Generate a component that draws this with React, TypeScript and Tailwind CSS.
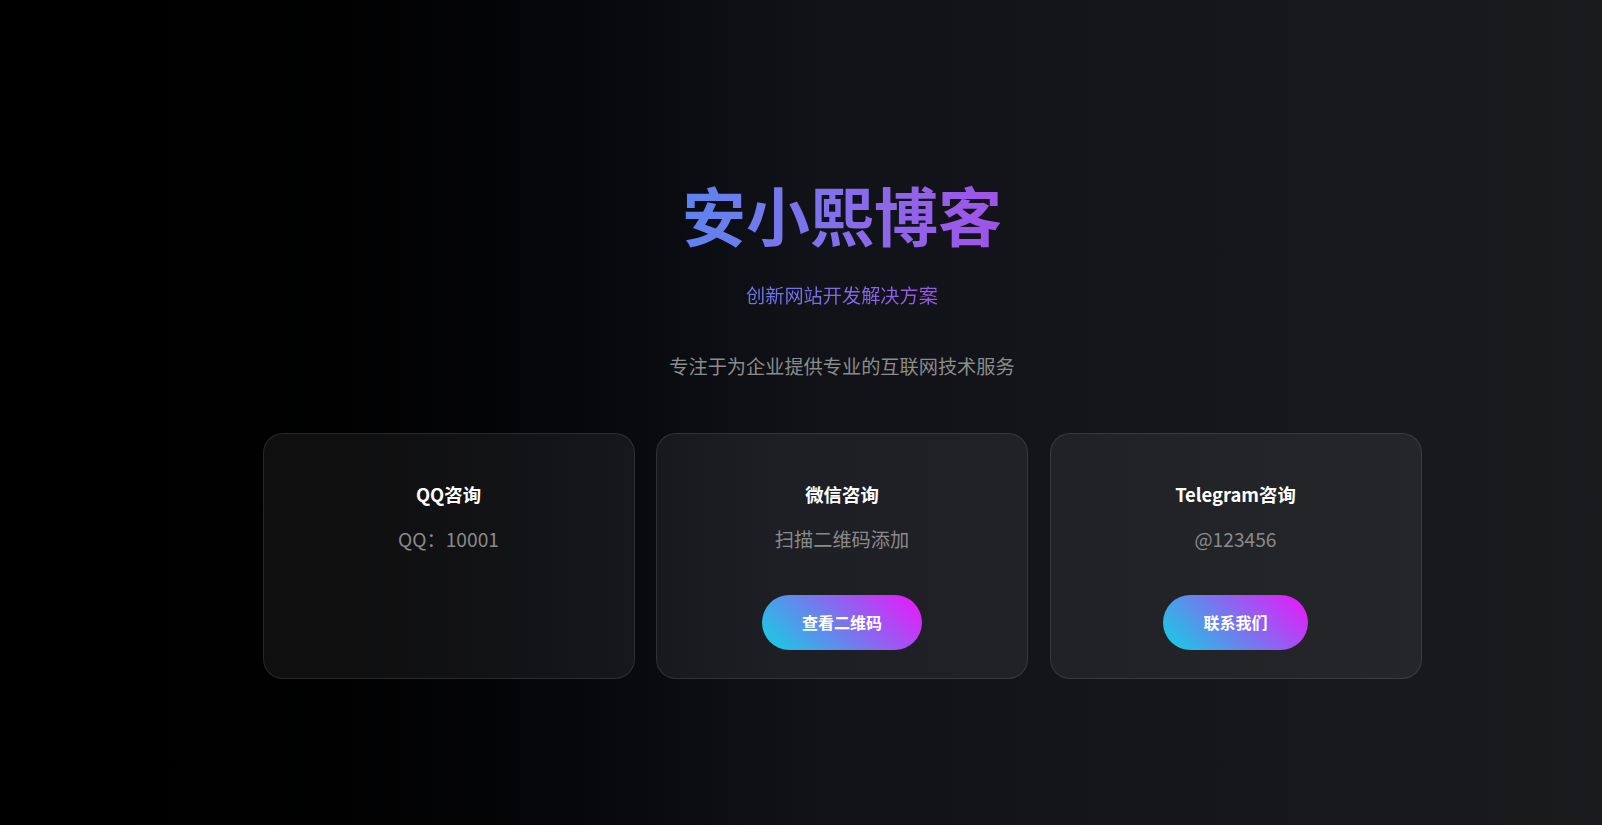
import React from 'react';

const font = { fontFamily: '"Noto Sans CJK SC", "Noto Sans", sans-serif' };

interface ContactCard {
  title: string;
  detail: string;
  action?: string;
}

const cards: ContactCard[] = [
  { title: 'QQ咨询', detail: 'QQ：10001' },
  { title: '微信咨询', detail: '扫描二维码添加', action: '查看二维码' },
  { title: 'Telegram咨询', detail: '@123456', action: '联系我们' },
];

export default function App() {
  return (
    <div
      className="min-h-screen w-full bg-linear-to-r from-black via-[#101218] to-[#1a1b1d] flex justify-center pl-[82px]"
      style={font}
    >
      <div className="flex flex-col items-center pt-[175px]">
        <h1 className="text-[64px] leading-[1.2] font-bold bg-linear-to-r from-[#5b84ee] to-[#a052e8] bg-clip-text text-transparent">
          安小熙博客
        </h1>
        <p className="mt-[29px] text-[19.2px] leading-[1.5] bg-linear-to-r from-[#6679ea] to-[#9b55e6] bg-clip-text text-transparent">
          创新网站开发解决方案
        </p>
        <p className="mt-[42px] text-[19.2px] leading-[1.5] text-[#8c8c8c]">
          专注于为企业提供专业的互联网技术服务
        </p>

        <div className="mt-[53px] grid grid-cols-3 gap-[21.5px]">
          {cards.map((card) => (
            <div
              key={card.title}
              className="w-[372px] h-[246px] rounded-[20px] border border-white/10 bg-white/[0.06] flex flex-col items-center pt-[47px]"
            >
              <h3 className="text-[18.4px] leading-[1.5] font-bold text-white">{card.title}</h3>
              <p className="mt-[16px] text-[19.2px] leading-[1.5] text-[#8a8a8a]">{card.detail}</p>
              {card.action && (
                <button className="mt-[41px] h-[55px] px-[40px] rounded-full bg-linear-45/srgb from-[#0fd3e3] via-[#7a74ee] to-[#ee14fb] text-white text-[16px] font-bold">
                  {card.action}
                </button>
              )}
            </div>
          ))}
        </div>
      </div>
    </div>
  );
}
